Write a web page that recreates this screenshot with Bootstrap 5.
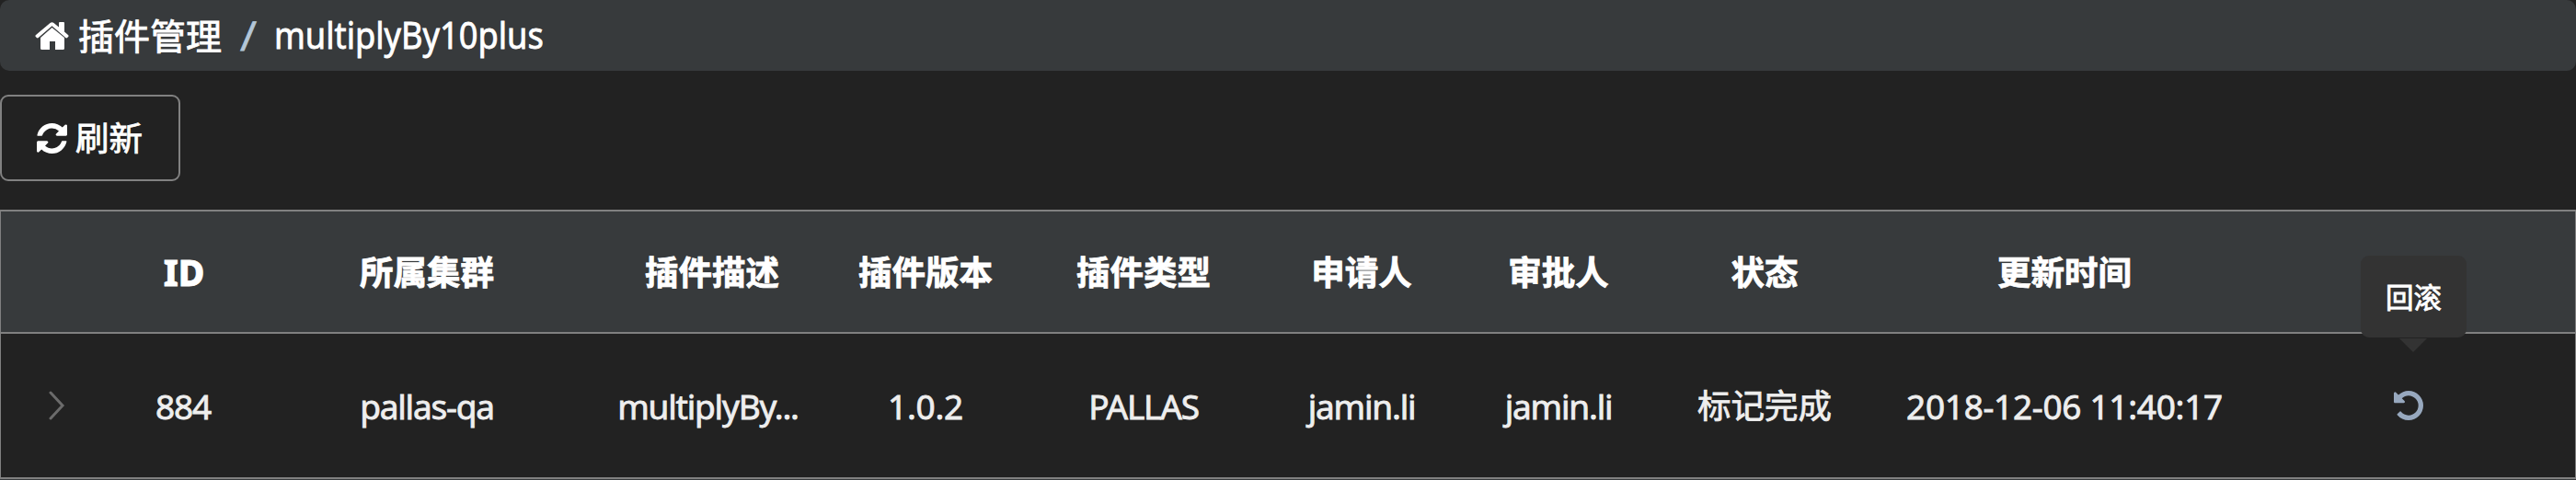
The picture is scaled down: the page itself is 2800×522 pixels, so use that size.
<!DOCTYPE html>
<html lang="zh-CN">
<head>
<meta charset="utf-8">
<title>插件管理</title>
<link rel="stylesheet" href="https://cdn.jsdelivr.net/npm/bootstrap@5.3.0/dist/css/bootstrap.min.css">
<style>
body{background:#222;color:#fff;font-family:"Noto Sans","Noto Sans CJK SC",sans-serif;font-size:36.500px;line-height:1;height:522px;overflow:hidden;-webkit-text-stroke:.8px currentColor}
.crumbs{height:77px;background:#373a3c;border-radius:10px;padding-left:38px;font-size:39px;--bs-breadcrumb-margin-bottom:0}
.crumbs .breadcrumb-item+.breadcrumb-item{padding-left:21px;padding-bottom:2px}
.crumbs .breadcrumb-item+.breadcrumb-item::before{color:#b3c6d8;padding-right:20px;font-size:44px;transform:skewX(-3deg)}
.crumbs .home{margin-right:10px}
.crumb-name{display:block;font-size:40px;transform:scaleX(.905);transform-origin:left}
.refresh{width:196px;height:94px;margin-top:26px;border:2px solid #818181;border-radius:9px;background:transparent;color:#fff;font-size:36.500px;line-height:1;padding:1px 0 0 38px}
.refresh svg{margin-right:9px}
.plugins{width:2800px;margin-top:31px;table-layout:fixed;border:0 solid gray;border-width:0 1px;border-collapse:separate;border-spacing:0;line-height:1}
.plugins th,.plugins td{padding:2px 2px 0 0;text-align:center;vertical-align:middle;white-space:nowrap}
.plugins th{height:135px;background:#373a3c;border-top:2px solid gray;border-bottom:2px solid gray}
.plugins .id-head{font-size:39px;font-weight:800;padding:0}
.plugins td{height:158px;border-bottom:2px solid gray;color:#eee;padding-top:1px}
.plugins .latin{font-size:37px;letter-spacing:-1.200px;padding-top:0}
.plugins .numeric{font-size:37px;letter-spacing:-.300px;padding-top:0}
.plugins .desc{padding-right:11px}
.plugins .plain{padding:0}
svg{display:block;flex:none}
.rollback{width:32px;margin-left:151px}
.tip{left:-36px;bottom:90px;width:115px;height:89px;border-radius:9px;background:#333;color:#fff;font-size:30.500px;padding-top:2px}
.tip::after{content:"";position:absolute;left:42px;top:90px;border:15px solid transparent;border-top-color:#333;border-bottom:0}
.endbar{height:1px;background:#373a3c}
</style>
</head>
<body>
<nav>
<ol class="breadcrumb crumbs d-flex align-items-center">
<li class="breadcrumb-item d-flex align-items-center"><svg class="home" width="37" height="30" viewBox="0 0 37 30"><path fill="#fff" d="M18.5 6 32 17v11.5a1.5 1.5 0 0 1-1.5 1.5H22v-9h-6v9H7.500a1.500 1.500 0 0 1-1.500-1.500V17z"/><path fill="#fff" d="M16.500 1q2-1.600 4 0L26 5.500V1q0-1 1-1h4q1 0 1 1v9.500l4 3.400q1 1 .2 2l-1.100 1.200q-.9.700-1.800 0L18.500 4.300 3.700 17.100q-.9.700-1.800 0L.8 15.900q-.8-1 .2-2z"/></svg>插件管理</li>
<li class="breadcrumb-item d-flex align-items-center"><span class="crumb-name">multiplyBy10plus</span></li>
</ol>
</nav>
<button class="btn refresh d-flex align-items-center"><svg width="33" height="33" viewBox="0 0 1536 1536"><path fill="#fff" d="M1511 928q0 5-1 7-64 268-268 434.500T764 1536q-146 0-282.500-55T238 1324l-129 129q-19 19-45 19t-45-19-19-45V960q0-26 19-45t45-19h448q26 0 45 19t19 45-19 45l-137 137q71 66 161 102t187 36q134 0 250-65t186-179q11-17 53-117 8-23 30-23h192q13 0 22.500 9.500t9.500 22.500zm25-800v448q0 26-19 45t-45 19h-448q-26 0-45-19t-19-45 19-45l138-138Q969 256 768 256q-134 0-250 65T332 500q-11 17-53 117-8 23-30 23H50q-13 0-22.500-9.500T18 608v-7q65-268 270-434.500T768 0q146 0 284 55.500T1297 212l130-129q19-19 45-19t45 19 19 45z"/></svg>刷新</button>
<table class="plugins">
<colgroup><col style="width:122px"><col style="width:154px"><col style="width:376px"><col style="width:244px"><col style="width:220px"><col style="width:254px"><col style="width:220px"><col style="width:208px"><col style="width:240px"><col style="width:412px"><col></colgroup>
<thead><tr><th></th><th class="id-head">ID</th><th>所属集群</th><th>插件描述</th><th>插件版本</th><th>插件类型</th><th>申请人</th><th>审批人</th><th>状态</th><th>更新时间</th><th></th></tr></thead>
<tbody><tr><td class="plain"><svg class="mx-auto" width="18" height="32" viewBox="0 0 18 32"><path d="M2 2 15 16 2 30" fill="none" stroke="#6b6b6b" stroke-width="3" stroke-linecap="round"/></svg></td><td class="latin">884</td><td class="latin">pallas-qa</td><td class="latin desc">multiplyBy...</td><td class="numeric">1.0.2</td><td class="latin">PALLAS</td><td class="latin">jamin.li</td><td class="latin">jamin.li</td><td>标记完成</td><td class="numeric">2018-12-06 11:40:17</td>
<td class="plain"><div class="rollback position-relative"><svg width="32" height="32" viewBox="0 0 1536 1536"><path fill="#97a8be" d="M1536 768q0 156-61 298t-164 245-245 164-298 61q-172 0-327-72.500T177 1259q-7-10-6.500-22.500T179 1216l137-138q10-9 25-9 16 2 23 12 73 95 179 147t225 52q104 0 198.500-40.500T1130 1130t109.500-163.500T1280 768t-40.500-198.500T1130 406 966.500 296.500 768 256q-98 0-188 35.500T420 393l137 138q31 30 14 69-17 40-59 40H64q-26 0-45-19T0 576V128q0-42 40-59 39-17 69 14l130 129Q346 111 483.500 55.500T768 0q156 0 298 61t245 164 164 245 61 298z"/></svg><div class="tip position-absolute d-flex align-items-center justify-content-center">回滚</div></div></td></tr></tbody>
</table>
<div class="endbar"></div>
<script src="https://cdn.jsdelivr.net/npm/bootstrap@5.3.0/dist/js/bootstrap.bundle.min.js"></script>
</body>
</html>
